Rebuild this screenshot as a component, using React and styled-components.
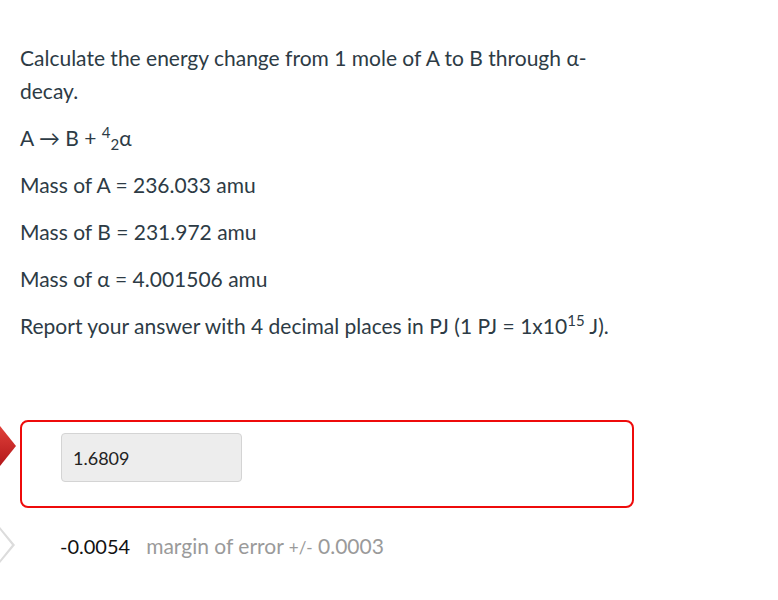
import React from 'react'
import styled, { createGlobalStyle } from 'styled-components'

const GlobalStyle = createGlobalStyle`
  body {
    margin: 0;
    background: #fff;
    font-family: Lato, "Open Sans", sans-serif;
    color: #2d3b45;
  }
`

const Page = styled.div`
  width: 778px;
  height: 600px;
  overflow: hidden;
`

const Question = styled.div`
  padding: 41px 20px 0 20px;
  width: 600px;
`

const Para = styled.p`
  margin: 0 0 14px 0;
  font-size: 21px;
  line-height: 33px;
`

const Sup = styled.sup`
  font-size: 15px;
  line-height: 0;
  vertical-align: 8px;
`

const Sub = styled.sub`
  font-size: 15px;
  line-height: 0;
  vertical-align: -4px;
`

const AnswerRow = styled.div`
  display: flex;
  align-items: flex-start;
  margin-top: 78px;
`

const Marker = styled.div`
  width: 20px;
  flex-shrink: 0;
  padding-top: ${(p) => p.top};
  svg { display: block; }
`

const AnswerBox = styled.div`
  width: 614px;
  height: 88px;
  box-sizing: border-box;
  border: 2.5px solid #ee0b0b;
  border-radius: 8px;
  padding: 11px 0 0 39px;
`

const AnswerInput = styled.div`
  width: 181px;
  height: 49px;
  box-sizing: border-box;
  background: #ededed;
  border: 1px solid #d4d4d4;
  border-radius: 4px;
  padding-left: 11px;
  display: flex;
  align-items: center;
  font-size: 18px;
  color: #222;
`

const CorrectRow = styled.div`
  display: flex;
  align-items: flex-start;
  margin-top: 19px;
`

const CorrectText = styled.div`
  padding-left: 40px;
  padding-top: 6px;
  font-size: 20px;
  color: #111;
  white-space: nowrap;
`

const Margin = styled.span`
  color: #9a9a9a;
  font-size: 21px;
  margin-left: 16px;
`

const Small = styled.span`
  font-size: 17px;
`

function RedArrow() {
  return (
    <svg width="16" height="40" viewBox="0 0 16 40">
      <defs>
        <linearGradient id="rg" x1="0" y1="0" x2="0" y2="1">
          <stop offset="0" stopColor="#e0413a" />
          <stop offset="1" stopColor="#b3171a" />
        </linearGradient>
      </defs>
      <polygon points="0,0 16,20 0,40" fill="url(#rg)" />
    </svg>
  )
}

function GrayArrow() {
  return (
    <svg width="16" height="36" viewBox="0 0 16 36">
      <polygon points="0,0 15,18 0,36 0,33 12,18 0,3" fill="#dcdcdc" />
    </svg>
  )
}

export default function App() {
  return (
    <Page>
      <GlobalStyle />
      <Question>
        <Para>Calculate the energy change from 1 mole of A to B through α-decay.</Para>
        <Para>A → B + <Sup>4</Sup><Sub>2</Sub>α</Para>
        <Para>Mass of A = 236.033 amu</Para>
        <Para>Mass of B = 231.972 amu</Para>
        <Para>Mass of α = 4.001506 amu</Para>
        <Para>Report your answer with 4 decimal places in PJ (1 PJ = 1x10<Sup>15</Sup> J).</Para>
      </Question>
      <AnswerRow>
        <Marker top="6px"><RedArrow /></Marker>
        <AnswerBox>
          <AnswerInput>1.6809</AnswerInput>
        </AnswerBox>
      </AnswerRow>
      <CorrectRow>
        <Marker top="0"><GrayArrow /></Marker>
        <CorrectText>
          -0.0054<Margin>margin of error <Small>+/-</Small> 0.0003</Margin>
        </CorrectText>
      </CorrectRow>
    </Page>
  )
}
